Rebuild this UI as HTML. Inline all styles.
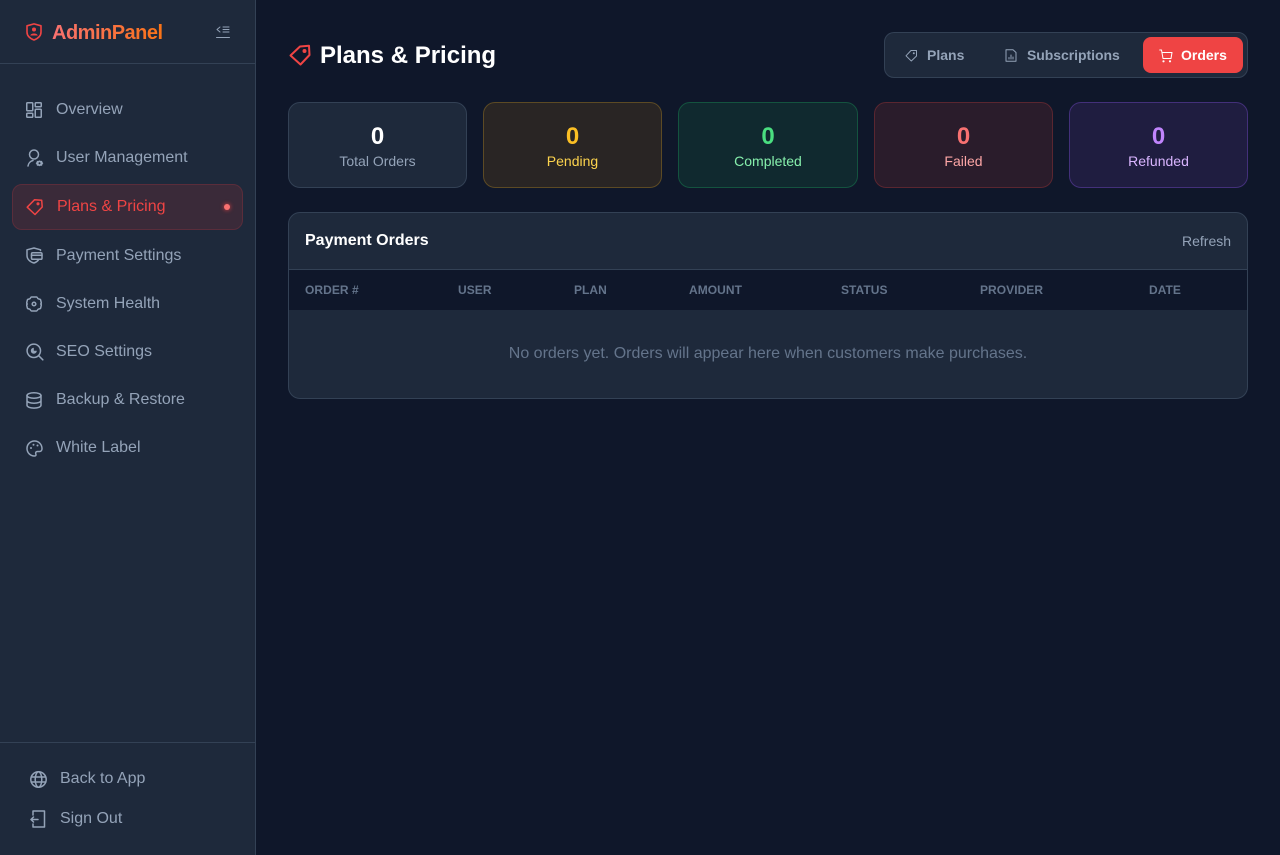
<!DOCTYPE html>
<html><head><meta charset="utf-8"><title>Plans &amp; Pricing</title>
<style>
*{box-sizing:border-box;margin:0;padding:0}
html,body{width:1280px;height:855px;overflow:hidden;background:#0f172a;font-family:"Liberation Sans",sans-serif}
.a{position:absolute;white-space:nowrap}
svg{position:absolute;fill:none;stroke-linecap:round;stroke-linejoin:round}
#side{position:absolute;left:0;top:0;width:256px;height:855px;background:#1e293b;border-right:1px solid #334155}
.nav{position:absolute;left:56px;font-size:16px;line-height:20px;color:#94a3b8;white-space:nowrap}
.ic{stroke:#94a3b8;stroke-width:1.5}
.card{position:absolute;top:102px;height:86px;border-radius:12px;border:1px solid;text-align:center}
.card b{position:absolute;left:0;right:0;top:20px;font-size:24px;line-height:28px}
.card span{position:absolute;left:0;right:0;top:49px;font-size:14px;line-height:18px}
.th{position:absolute;top:282px;font-size:12px;line-height:16px;font-weight:700;color:#64748b;letter-spacing:.05px;white-space:nowrap}
</style></head><body>
<div id="side">
<div class="a" style="left:0;top:63px;width:255px;height:1px;background:#334155"></div>
<div class="a" style="left:52px;top:20px;font-size:20px;line-height:26px;font-weight:700;letter-spacing:-.5px;background:linear-gradient(90deg,#f87171,#f97316);-webkit-background-clip:text;background-clip:text;color:transparent">AdminPanel</div>
<svg style="left:26px;top:23px" width="16" height="18" viewBox="0 0 16 18" stroke="#ef4444" stroke-width="1.600"><path d="M8 .9L15 2.800V9C15 12.800 12 15.500 8 17C4 15.500 1 12.800 1 9V2.800Z"/><circle cx="8" cy="6.500" r="2" fill="#ef4444" stroke="none"/><path d="M4.300 12.500C4.800 9.800 11.200 9.800 11.700 12.500Z" fill="#ef4444" stroke="none"/></svg>
<svg style="left:215px;top:25px" width="16" height="14" viewBox="0 0 16 14" stroke="#94a3b8" stroke-width="1"><path d="M5 2L2 4.500L5 7M8 2H14M8 4.500H14M8 7H14M1.500 12.500H14.500"/></svg>

<svg class="ic" style="left:26px;top:102px" width="16" height="16" viewBox="0 0 16 16"><rect x=".75" y=".75" width="6" height="8" rx=".8"/><rect x="9.250" y=".75" width="6" height="4" rx=".8"/><rect x=".75" y="11.250" width="6" height="4" rx=".8"/><rect x="9.250" y="7.250" width="6" height="8" rx=".8"/></svg>
<div class="nav" style="top:100px">Overview</div>
<svg class="ic" style="left:27px;top:149px" width="17" height="18" viewBox="0 0 17 18"><circle cx="7" cy="5.500" r="4.500"/><path d="M1 17C1.500 14.200 3.500 12 6 11.500"/><path d="M12.500 11.400L13.500 11.900L15 11.900L15.500 13.300L16.300 14.300L15.500 15.300L15 16.700L13.500 16.700L12.500 17.200L11.500 16.700L10 16.700L9.500 15.300L8.700 14.300L9.500 13.300L10 11.900L11.500 11.900Z" fill="#94a3b8" stroke="none"/><circle cx="12.500" cy="14.300" r="1" fill="#1e293b" stroke="none"/></svg>
<div class="nav" style="top:148px">User Management</div>

<div class="a" style="left:12px;top:184px;width:231px;height:46px;border-radius:10px;background:#3a2a39;border:1px solid #5a2d3b"></div>
<svg style="left:26px;top:198px" width="18" height="18" viewBox="0 0 18 18" stroke="#ef4444" stroke-width="1.500"><path d="M1.200 9.200L8.500 1.800L15.700 2.300L16.200 9L9 16.500Z"/><circle cx="12" cy="5.800" r=".8" fill="#ef4444"/></svg>
<div class="nav" style="top:197px;left:57px;color:#ef4444">Plans &amp; Pricing</div>
<div class="a" style="left:224px;top:204px;width:6px;height:6px;border-radius:50%;background:#f87171;box-shadow:0 0 4px #ef4444"></div>

<svg class="ic" style="left:26px;top:247px" width="18" height="17" viewBox="0 0 18 17"><path d="M14.500 3.500V2.800L8 1L1 2.800V8.500C1 12.200 4 15 8 16C9.800 15.500 11.300 14.400 12.400 13"/><rect x="5.500" y="5.800" width="10.500" height="6.500" rx="1.200"/><path d="M5.500 8.200H16"/></svg>
<div class="nav" style="top:246px">Payment Settings</div>
<svg class="ic" style="left:26px;top:296px" width="16" height="16" viewBox="0 0 16 16"><path d="M5.500 1H10.500C11.200 1 11.500 2.300 12.200 2.800C13 3.300 14.300 3 14.600 3.800L15.300 6.800C15.500 7.500 14.700 7.800 14.700 8C14.700 8.200 15.500 8.500 15.300 9.200L14.600 12.200C14.300 13 13 12.700 12.200 13.200C11.500 13.700 11.200 15 10.500 15H5.500C4.800 15 4.500 13.700 3.800 13.200C3 12.700 1.700 13 1.400 12.200L.7 9.200C.5 8.500 1.300 8.200 1.300 8C1.300 7.800 .5 7.500 .7 6.800L1.400 3.800C1.700 3 3 3.300 3.800 2.800C4.500 2.300 4.800 1 5.500 1Z"/><circle cx="8" cy="8" r="1.800"/></svg>
<div class="nav" style="top:294px">System Health</div>
<svg class="ic" style="left:26px;top:343px" width="18" height="18" viewBox="0 0 18 18"><circle cx="7.800" cy="7.800" r="6.700"/><path d="M12.800 12.800L16.800 16.800"/><path d="M7.800 4.800A3 3 0 1 0 10.800 7.800H7.800Z" fill="#94a3b8" stroke="none"/></svg>
<div class="nav" style="top:342px">SEO Settings</div>
<svg class="ic" style="left:26px;top:392px" width="16" height="17" viewBox="0 0 16 17"><ellipse cx="8" cy="3.500" rx="7" ry="2.700"/><path d="M1 3.500V13.300C1 14.900 4 16.100 8 16.100S15 14.900 15 13.300V3.500M1 8.500C1 10 4 11.200 8 11.200S15 10 15 8.500"/></svg>
<div class="nav" style="top:390px">Backup &amp; Restore</div>
<svg class="ic" style="left:26px;top:440px" width="17" height="17" viewBox="0 0 17 17"><path d="M8.500 1C4.300 1 1 4.300 1 8.500S4.300 16 8.500 16C10 16 10.300 15 9.800 14C9.200 12.800 10 11.500 11.300 11.500H13.500C15 11.500 16 10.300 16 8.800C16 4.300 12.700 1 8.500 1Z"/><circle cx="5" cy="8" r="1" fill="#94a3b8" stroke="none"/><circle cx="7.500" cy="4.800" r="1" fill="#94a3b8" stroke="none"/><circle cx="11.500" cy="5.500" r="1" fill="#94a3b8" stroke="none"/></svg>
<div class="nav" style="top:438px">White Label</div>

<div class="a" style="left:0;top:742px;width:255px;height:1px;background:#334155"></div>
<svg class="ic" style="left:30px;top:771px" width="17" height="17" viewBox="0 0 17 17"><circle cx="8.500" cy="8.500" r="7.700"/><ellipse cx="8.500" cy="8.500" rx="3.300" ry="7.700"/><path d="M1.200 6H15.800M1.200 11H15.800"/></svg>
<div class="nav" style="left:60px;top:769px">Back to App</div>
<svg class="ic" style="left:30px;top:810px" width="16" height="18" viewBox="0 0 16 18"><path d="M3 5V1H14.500V17H3V14M8 9.500H1M3.500 7L1 9.500L3.500 12"/></svg>
<div class="nav" style="left:60px;top:809px">Sign Out</div>
</div>

<svg style="left:289px;top:44px" width="22" height="22" viewBox="0 0 22 22" stroke="#ef4444" stroke-width="2"><path d="M1.500 11.500L11 2.500L20 1.700L20.500 11L11.500 20.500Z"/><circle cx="15.500" cy="7" r="1" fill="#ef4444"/></svg>
<div class="a" style="left:320px;top:41px;font-size:24px;line-height:30px;font-weight:700;color:#fff">Plans &amp; Pricing</div>

<div class="a" style="left:884px;top:32px;width:364px;height:46px;border-radius:10px;background:#1e293b;border:1px solid #334155"></div>
<svg style="left:905px;top:49px" width="13" height="13" viewBox="0 0 13 13" stroke="#94a3b8" stroke-width="1"><path d="M1 6.800L6 1.500L11.500 1.500V7L6.300 12Z"/><circle cx="8.800" cy="4.200" r=".5" fill="#94a3b8"/></svg>
<div class="a" style="left:927px;top:47px;font-size:14px;line-height:17px;font-weight:700;color:#94a3b8">Plans</div>
<svg style="left:1005px;top:49px" width="12" height="13" viewBox="0 0 12 13" stroke="#94a3b8" stroke-width="1"><path d="M1 .7H8L11 3.500V12.300H1ZM4 10V8.500M6 10V6M8 10V8"/></svg>
<div class="a" style="left:1027px;top:47px;font-size:14px;line-height:17px;font-weight:700;letter-spacing:-.05px;color:#94a3b8">Subscriptions</div>
<div class="a" style="left:1143px;top:37px;width:100px;height:36px;border-radius:8px;background:#ef4444"></div>
<svg style="left:1159px;top:49px" width="14" height="14" viewBox="0 0 14 14" stroke="#fff" stroke-width="1"><path d="M.7 1H2.500L4 9.500H12L13 3.500H3"/><circle cx="4.500" cy="12.300" r=".6" fill="#fff"/><circle cx="11" cy="12.300" r=".6" fill="#fff"/></svg>
<div class="a" style="left:1181px;top:47px;font-size:14px;line-height:17px;font-weight:700;color:#fff">Orders</div>

<div class="card" style="left:288px;width:179px;background:#1e293b;border-color:#334155"><b style="color:#fff">0</b><span style="color:#94a3b8">Total Orders</span></div>
<div class="card" style="left:483px;width:179px;background:#292524;border-color:#5c4a24"><b style="color:#fbbf24">0</b><span style="color:#fcd34d">Pending</span></div>
<div class="card" style="left:678px;width:180px;background:#10292f;border-color:#14533f"><b style="color:#4ade80">0</b><span style="color:#86efac">Completed</span></div>
<div class="card" style="left:874px;width:179px;background:#2a1c2b;border-color:#5a2630"><b style="color:#f87171">0</b><span style="color:#fca5a5">Failed</span></div>
<div class="card" style="left:1069px;width:179px;background:#1f1d40;border-color:#43307a"><b style="color:#c084fc">0</b><span style="color:#d8b4fe">Refunded</span></div>

<div class="a" style="left:288px;top:212px;width:960px;height:187px;border-radius:12px;background:#1e293b;border:1px solid #334155;overflow:hidden">
<div class="a" style="left:0;top:56px;width:958px;height:1px;background:#334155"></div>
<div class="a" style="left:0;top:57px;width:958px;height:40px;background:#0f172a"></div>
</div>
<div class="a" style="left:305px;top:231px;font-size:16px;line-height:19px;font-weight:700;color:#fff">Payment Orders</div>
<div class="a" style="left:1182px;top:232px;font-size:14px;line-height:18px;color:#94a3b8">Refresh</div>
<div class="th" style="left:305px">ORDER #</div>
<div class="th" style="left:458px">USER</div>
<div class="th" style="left:574px">PLAN</div>
<div class="th" style="left:689px">AMOUNT</div>
<div class="th" style="left:841px">STATUS</div>
<div class="th" style="left:980px">PROVIDER</div>
<div class="th" style="left:1149px">DATE</div>
<div class="a" style="left:288px;width:960px;top:344px;text-align:center;font-size:16px;line-height:19px;color:#64748b">No orders yet. Orders will appear here when customers make purchases.</div>
</body></html>
